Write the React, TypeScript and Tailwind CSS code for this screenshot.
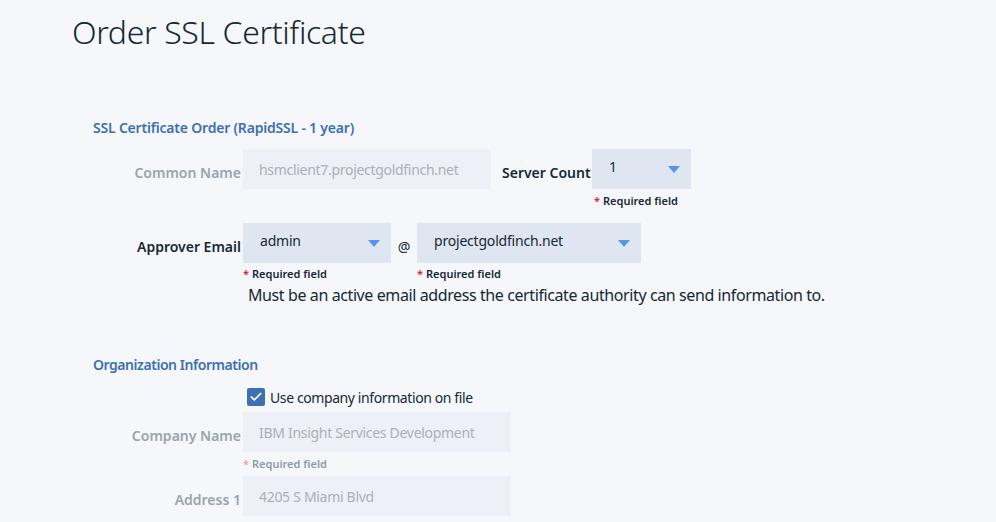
import { Check } from 'lucide-react'

const font = { fontFamily: '"Noto Sans", "Open Sans", sans-serif' }

function Caret() {
    return (
        <svg width="12" height="7" viewBox="0 0 12 7" className="shrink-0">
            <path d="M0 0h12L6 7z" fill="#5596e6" />
        </svg>
    )
}

function Required({ muted = false }: { muted?: boolean }) {
    return (
        <div className={`flex items-start h-[14px] text-[11px] leading-[14px] font-semibold ${muted ? 'text-[#8c9ba5]' : 'text-[#152935]'}`}>
            <span className={`mr-[3px] ${muted ? 'text-[#f0a0a8]' : 'text-[#e0182d]'}`}>*</span>
            Required field
        </div>
    )
}

function Label({ text, muted = false }: { text: string; muted?: boolean }) {
    return (
        <div className={`w-[148px] shrink-0 pt-[6px] text-right text-[14px] font-semibold ${muted ? 'text-[#9aa4ad]' : 'text-[#152935]'}`}>
            {text}
        </div>
    )
}

function DisabledInput({ value, width }: { value: string; width: string }) {
    return (
        <div className={`${width} h-[40px] ml-[2px] bg-[#edf0f6] flex items-center px-4 text-[14px] tracking-[-0.3px] text-[#a9b1b8]`}>
            {value}
        </div>
    )
}

function Select({ value, width }: { value: string; width: string }) {
    return (
        <div className={`${width} h-[40px] bg-[#e0e6f1] flex items-center justify-between pl-[17px] pr-[11px] text-[14px] tracking-[-0.2px] text-[#152935]`}>
            <span className="pb-[5px]">{value}</span>
            <Caret />
        </div>
    )
}

export default function App() {
    return (
        <div className="min-h-screen w-full bg-[#f5f7fa] text-[#152935] overflow-hidden" style={font}>
            <div className="pl-[72px] pt-[12px]">
                <h1 className="text-[32px] leading-[40px] font-light tracking-[-0.35px]">Order SSL Certificate</h1>
            </div>

            <div className="pl-[93px] mt-[66px] flex flex-col">
                <h2 className="text-[14px] leading-[20px] font-semibold tracking-[-0.2px] text-[#3d70b2]">SSL Certificate Order (RapidSSL - 1 year)</h2>

                {/* common name + server count */}
                <div className="flex items-center mt-[11px]">
                    <Label text="Common Name" muted />
                    <DisabledInput value="hsmclient7.projectgoldfinch.net" width="w-[248px]" />
                    <div className="ml-[11px] pt-[6px] text-[14px] font-semibold w-[90px]">Server Count</div>
                    <Select value="1" width="w-[99px]" />
                </div>
                <div className="flex mt-[5px] pl-[501px]">
                    <Required />
                </div>

                {/* approver email */}
                <div className="flex items-center mt-[15px]">
                    <Label text="Approver Email" />
                    <div className="ml-[2px]">
                        <Select value="admin" width="w-[148px]" />
                    </div>
                    <span className="w-[26px] text-center pt-[6px] text-[14px]">@</span>
                    <Select value="projectgoldfinch.net" width="w-[224px]" />
                </div>
                <div className="flex mt-[4px] pl-[150px]">
                    <div className="w-[174px]"><Required /></div>
                    <Required />
                </div>
                <p className="mt-[3px] pl-[155px] text-[16px] leading-[22px] tracking-[-0.4px]">
                    Must be an active email address the certificate authority can send information to.
                </p>

                <h2 className="mt-[49px] text-[14px] leading-[20px] font-semibold tracking-[-0.45px] text-[#3d70b2]">Organization Information</h2>

                <div className="flex items-center mt-[12px] pl-[154px] h-[20px]">
                    <div className="w-[18px] h-[18px] rounded-[2px] bg-[#3d70b2] flex items-center justify-center">
                        <Check size={14} strokeWidth={3} color="#ffffff" />
                    </div>
                    <span className="ml-[5px] text-[14px] tracking-[-0.4px]">Use company information on file</span>
                </div>

                <div className="flex items-center mt-[5px]">
                    <Label text="Company Name" muted />
                    <DisabledInput value="IBM Insight Services Development" width="w-[268px]" />
                </div>
                <div className="flex mt-[5px] pl-[150px]">
                    <Required muted />
                </div>

                <div className="flex items-center mt-[5px]">
                    <Label text="Address 1" muted />
                    <DisabledInput value="4205 S Miami Blvd" width="w-[268px]" />
                </div>
            </div>
        </div>
    )
}
